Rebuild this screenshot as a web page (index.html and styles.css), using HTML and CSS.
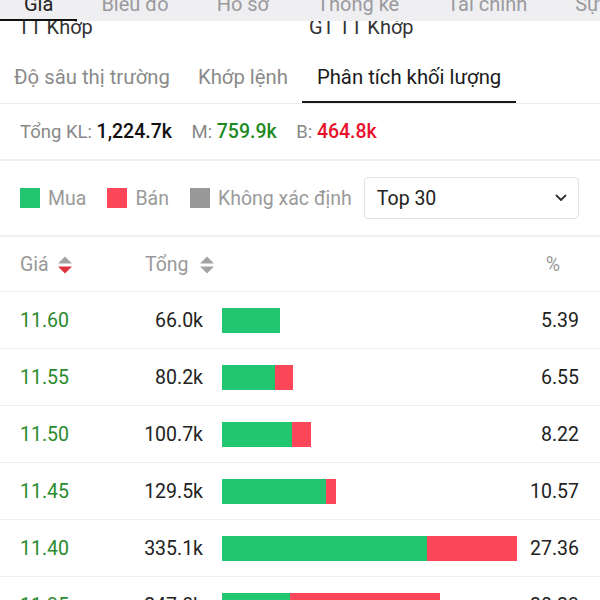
FILE: index.html
```html
<!DOCTYPE html>
<html lang="vi">
<head>
    <meta charset="UTF-8">
    <meta name="viewport" content="width=device-width, initial-scale=1.0">
    <title>Phân tích khối lượng</title>
    <link rel="stylesheet" href="styles.css">
</head>
<body>
    <div class="topnav">
        <div class="topnav-item active">Giá</div>
        <div class="topnav-item">Biểu đồ</div>
        <div class="topnav-item">Hồ sơ</div>
        <div class="topnav-item">Thống kê</div>
        <div class="topnav-item">Tài chính</div>
        <div class="topnav-item">Sự kiện</div>
    </div>

    <div class="match-row">
        <div class="match-cell">TT Khớp</div>
        <div class="match-cell">GT TT Khớp</div>
    </div>

    <div class="tabs">
        <div class="tab">Độ sâu thị trường</div>
        <div class="tab">Khớp lệnh</div>
        <div class="tab active">Phân tích khối lượng</div>
    </div>

    <div class="summary">
        <span class="label">Tổng KL:</span> <span class="value">1,224.7k</span>
        <span class="label gap">M:</span> <span class="value buy">759.9k</span>
        <span class="label gap">B:</span> <span class="value sell">464.8k</span>
    </div>

    <div class="legend">
        <div class="legend-item"><span class="swatch buy-bg"></span>Mua</div>
        <div class="legend-item"><span class="swatch sell-bg"></span>Bán</div>
        <div class="legend-item"><span class="swatch none-bg"></span>Không xác định</div>
        <div class="select">
            <span>Top 30</span>
            <svg class="chevron" width="12" height="8" viewBox="0 0 12 8">
                <polyline points="1.5,1.5 6,6 10.5,1.5" fill="none" stroke="#333" stroke-width="1.8" stroke-linecap="round" stroke-linejoin="round"/>
            </svg>
        </div>
    </div>

    <div class="table-head">
        <div class="head-cell price-head">Giá
            <svg class="sort" width="16" height="20" viewBox="0 0 16 20">
                <polygon points="1,8.5 8,1.5 15,8.5" fill="#a3a3a3"/>
                <polygon points="1,11.5 15,11.5 8,18.5" fill="#e0313d"/>
            </svg>
        </div>
        <div class="head-cell total-head">Tổng
            <svg class="sort" width="16" height="20" viewBox="0 0 16 20">
                <polygon points="1,8.5 8,1.5 15,8.5" fill="#a3a3a3"/>
                <polygon points="1,11.5 15,11.5 8,18.5" fill="#a3a3a3"/>
            </svg>
        </div>
        <div class="head-cell pct-head">%</div>
    </div>

    <div class="rows">
        <div class="row">
            <div class="price">11.60</div>
            <div class="total">66.0k</div>
            <div class="bar-cell"><div class="bar" style="width:58px"><span class="buy-bg" style="width:100%"></span></div></div>
            <div class="pct">5.39</div>
        </div>
        <div class="row">
            <div class="price">11.55</div>
            <div class="total">80.2k</div>
            <div class="bar-cell"><div class="bar" style="width:71px"><span class="buy-bg" style="width:75%"></span><span class="sell-bg" style="width:25%"></span></div></div>
            <div class="pct">6.55</div>
        </div>
        <div class="row">
            <div class="price">11.50</div>
            <div class="total">100.7k</div>
            <div class="bar-cell"><div class="bar" style="width:89px"><span class="buy-bg" style="width:79%"></span><span class="sell-bg" style="width:21%"></span></div></div>
            <div class="pct">8.22</div>
        </div>
        <div class="row">
            <div class="price">11.45</div>
            <div class="total">129.5k</div>
            <div class="bar-cell"><div class="bar" style="width:114px"><span class="buy-bg" style="width:91%"></span><span class="sell-bg" style="width:9%"></span></div></div>
            <div class="pct">10.57</div>
        </div>
        <div class="row">
            <div class="price">11.40</div>
            <div class="total">335.1k</div>
            <div class="bar-cell"><div class="bar" style="width:295px"><span class="buy-bg" style="width:69.5%"></span><span class="sell-bg" style="width:30.5%"></span></div></div>
            <div class="pct">27.36</div>
        </div>
        <div class="row">
            <div class="price">11.35</div>
            <div class="total">247.8k</div>
            <div class="bar-cell"><div class="bar" style="width:218px"><span class="buy-bg" style="width:31%"></span><span class="sell-bg" style="width:69%"></span></div></div>
            <div class="pct">20.23</div>
        </div>
    </div>
</body>
</html>
```

FILE: styles.css
```css
html, body {
    margin: 0;
    padding: 0;
    overflow: hidden;
    background: #fff;
}
body {
    font-family: Roboto, "Noto Sans", Arial, sans-serif;
    color: #222;
}

/* top navigation, scrolled so only the bottom of it shows */
.topnav {
    position: fixed;
    top: 0;
    left: 0;
    right: 0;
    height: 21px;
    overflow: hidden;
    display: flex;
    background: #efeff1;
    z-index: 2;
}
.topnav-item {
    padding: 0 24px;
    margin-top: -8px;
    font-size: 20px;
    line-height: 24px;
    height: 29px;
    color: #9a9a9e;
    white-space: nowrap;
    box-sizing: border-box;
    border-bottom: 2px solid transparent;
}
.topnav-item.active {
    color: #222;
    border-bottom-color: #111;
}

.match-row {
    display: flex;
    padding: 16px 0 9px 18px;
    font-size: 20px;
    line-height: 23px;
    color: #333;
}
.match-cell { width: 296px; }

.tabs {
    display: flex;
    border-bottom: 1px solid #ececec;
}
.tab {
    padding: 17px 14px 12px;
    font-size: 20.3px;
    line-height: 24px;
    color: #8a8a8a;
    border-bottom: 2px solid transparent;
    white-space: nowrap;
}
.tab.active {
    padding: 17px 15px 12px;
    color: #1a1a1a;
    border-bottom-color: #1a1a1a;
}

.summary {
    padding: 17px 20px 16px;
    font-size: 18.5px;
    line-height: 22px;
    border-bottom: 2px solid #f0f0f0;
}
.summary .label { color: #888; }
.summary .gap { margin-left: 15px; }
.summary .value { font-size: 19.5px; font-weight: 500; color: #111; }
.summary .buy { color: #1d8a24; }
.summary .sell { color: #e8112d; }

.legend {
    display: flex;
    align-items: center;
    padding: 16px 21px 16px 20px;
    border-bottom: 2px solid #f0f0f0;
}
.legend-item {
    display: flex;
    align-items: center;
    gap: 8px;
    margin-right: 21px;
    font-size: 19.5px;
    color: #9a9a9a;
}
.legend-item:nth-child(3) { margin-right: 12px; }
.swatch {
    width: 20px;
    height: 20px;
    display: inline-block;
}
.buy-bg { background: #22c670; }
.sell-bg { background: #fc475a; }
.none-bg { background: #999; }

.select {
    flex: 1;
    height: 42px;
    box-sizing: border-box;
    display: flex;
    align-items: center;
    justify-content: space-between;
    padding: 0 11px 0 12px;
    border: 1px solid #e2e2e2;
    border-radius: 4px;
    font-size: 19.5px;
    color: #222;
}

.table-head {
    display: flex;
    align-items: center;
    height: 54px;
    padding: 0 40px 0 20px;
    border-bottom: 1px solid #eee;
    font-size: 19.5px;
    color: #999;
}
.head-cell {
    display: flex;
    align-items: center;
    gap: 8px;
}
.price-head { width: 125px; }
.total-head { flex: 1; gap: 10px; }
.sort { margin-top: 2px; }

.row {
    display: grid;
    grid-template-columns: 110px 73px 1fr 60px;
    align-items: center;
    height: 56px;
    padding: 0 21px 0 20px;
    border-bottom: 1px solid #eee;
    font-size: 19.5px;
}
.price { color: #2a8a2e; }
.total { text-align: right; color: #222; }
.bar-cell { padding-left: 19px; }
.bar {
    display: flex;
    height: 25px;
}
.bar span { height: 100%; }
.pct { text-align: right; color: #222; }
```
